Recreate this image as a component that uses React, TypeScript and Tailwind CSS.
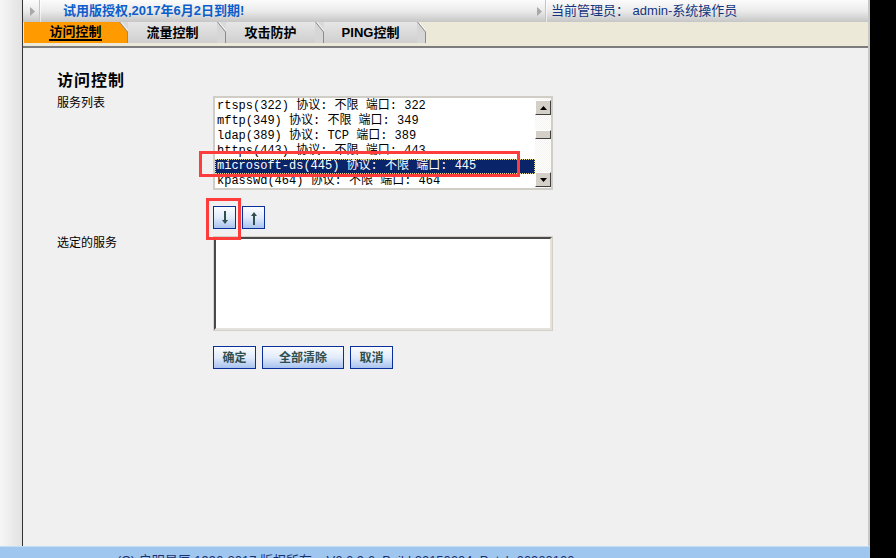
import React from "react";

const services = [
  "rtsps(322) 协议: 不限 端口: 322",
  "mftp(349) 协议: 不限 端口: 349",
  "ldap(389) 协议: TCP 端口: 389",
  "https(443) 协议: 不限 端口: 443",
  "microsoft-ds(445) 协议: 不限 端口: 445",
  "kpasswd(464) 协议: 不限 端口: 464",
];

const tabs = [
  { label: "流量控制", w: "w-[89px]" },
  { label: "攻击防护", w: "w-[89px]" },
  { label: "PING控制", w: "w-[93px]" },
];

function TabEdge({ left, right }: { left: string; right: string }) {
  return (
    <svg width="9" height="21" className="block shrink-0">
      <rect width="9" height="21" fill={right} />
      <polygon points="0,0 1,0 9,10 9,21 0,21" fill={left} />
      <polyline points="0.5,0 8.5,10 8.5,21" fill="none" stroke="#8c8c8c" strokeWidth="1" />
      <polyline points="2,0 9,8.5" fill="none" stroke="#f4f4f4" strokeWidth="1" />
    </svg>
  );
}

function Arrow({ up }: { up?: boolean }) {
  return (
    <svg width="8" height="14" viewBox="0 0 8 14" className={up ? "rotate-180" : ""}>
      <path d="M3 0h2v9h2l-3 4-3-4h2z" fill="#2f4f4f" />
    </svg>
  );
}

function TopArrow() {
  return (
    <svg width="5" height="9" viewBox="0 0 5 9">
      <path d="M0 0l5 4.5L0 9z" fill="#a8a8a8" />
    </svg>
  );
}

function ScrollBtn({ up }: { up?: boolean }) {
  return (
    <div className="flex h-[15px] w-[16px] items-center justify-center border border-t-white border-l-white border-r-[#404040] border-b-[#404040] bg-[#d4d0c8]">
      <svg width="7" height="4" viewBox="0 0 7 4" className={up ? "" : "rotate-180"}>
        <path d="M3.5 0L7 4H0z" fill="#000" />
      </svg>
    </div>
  );
}

const btn =
  "h-[23px] border border-[#0a2f9a] bg-gradient-to-b from-[#fbfcff] via-[#e2ebfa] to-[#a9c3ee] text-[12px] font-bold text-[#2f4f4f]";

export default function App() {
  return (
    <div
      className="flex h-[558px] w-[896px] overflow-hidden bg-black"
      style={{ fontFamily: '"Liberation Sans", "Noto Sans CJK SC", sans-serif' }}
    >
      <div className="flex w-[870px] shrink-0 flex-col">
        <div className="flex h-[546px] shrink-0">
          <div className="w-[22px] shrink-0 bg-gradient-to-r from-[#f6f6f6] to-[#e2e2e2]" />
          <div className="w-px shrink-0 bg-[#333]" />
          <main className="flex flex-1 flex-col border-r-2 border-[#c8c8c8] bg-[#f0f0f0]">
            <div className="flex h-[22px] items-center bg-gradient-to-b from-[#fbfbfb] via-[#ebebeb] to-[#c6c6c6]">
              <div className="flex h-full w-[514px] items-center">
                <div className="ml-[7px]">
                  <TopArrow />
                </div>
                <div className="ml-[4px] h-full w-[2px] border-l border-[#c4c4c4] bg-white/60" />
                <span className="ml-[22px] text-[13px] font-bold text-[#0b5ecb]">试用版授权,2017年6月2日到期!</span>
              </div>
              <div className="flex h-full items-center">
                <TopArrow />
                <div className="ml-[3px] h-full w-[2px] border-l border-[#c4c4c4] bg-white/60" />
                <span className="ml-[4px] text-[13px] text-[#14357e]">当前管理员： admin-系统操作员</span>
              </div>
            </div>

            <div className="flex h-[24px] bg-[#ece9d8] pl-px">
              <div className="flex h-[21px] w-[95px] items-center justify-center bg-[#ff9a00] pl-[8px]">
                <span className="border-b-2 border-black text-[13px] leading-[15px] font-bold text-black">访问控制</span>
              </div>
              <TabEdge left="#ff9a00" right="#d9d9d9" />
              {tabs.map((t, i) => (
                <React.Fragment key={t.label}>
                  <div
                    className={`flex h-[21px] ${t.w} items-center justify-center bg-gradient-to-b from-[#e6e6e6] to-[#cfcfcf] text-[13px] font-bold text-black`}
                  >
                    {t.label}
                  </div>
                  <TabEdge left="#d6d6d6" right={i === tabs.length - 1 ? "#ece9d8" : "#d9d9d9"} />
                </React.Fragment>
              ))}
            </div>
            <div className="h-[2px] bg-[#7c7c7c]" />

            <div className="relative flex-1 pl-[34px]">
              <h1 className="mt-[23px] h-[20px] text-[16px] leading-[20px] font-bold tracking-[1px] text-black">访问控制</h1>

              <div className="mt-[5px] flex">
                <div className="w-[156px] text-[12px] leading-[14px] text-black">服务列表</div>
                <div className="flex h-[94px] w-[340px] border-2 border-[#d0cdc6] bg-white">
                  <div
                    className="flex-1 overflow-hidden pt-px text-[12px] text-black"
                    style={{ fontFamily: '"Liberation Mono", "Noto Sans CJK SC", monospace' }}
                  >
                    {services.map((s, i) => (
                      <div
                        key={s}
                        className={
                          i === 4
                            ? "h-[15px] whitespace-pre bg-[#0a246a] pl-[2px] leading-[15px] text-white outline-1 outline-dotted outline-offset-[-1px] outline-[#e8e090]"
                            : "h-[15px] whitespace-pre pl-[2px] leading-[15px]"
                        }
                      >
                        {s}
                      </div>
                    ))}
                  </div>
                  <div className="flex w-[16px] flex-col bg-[repeating-conic-gradient(#f4f3ef_0_25%,#ffffff_0_50%)] bg-[length:2px_2px]">
                    <div className="mt-[2px]">
                      <ScrollBtn up />
                    </div>
                    <div className="mt-[15px] h-[9px] w-[16px] border border-t-white border-l-white border-r-[#404040] border-b-[#404040] bg-[#d4d0c8]" />
                    <div className="flex-1" />
                    <div className="mb-[1px]">
                      <ScrollBtn />
                    </div>
                  </div>
                </div>
              </div>

              <div className="ml-[156px] mt-[16px] flex gap-[6px]">
                <button className={`${btn} flex w-[23px] items-center justify-center`}>
                  <Arrow />
                </button>
                <button className={`${btn} flex w-[23px] items-center justify-center`}>
                  <Arrow up />
                </button>
              </div>

              <div className="mt-[7px] flex">
                <div className="w-[156px] text-[12px] leading-[14px] text-black">选定的服务</div>
                <div className="h-[95px] w-[340px] border border-[#d4d0c8]">
                  <div className="h-full border-2 border-t-[#4a4a4a] border-l-[#4a4a4a] border-r-[#e4e2dc] border-b-[#e4e2dc] bg-white" />
                </div>
              </div>

              <div className="ml-[156px] mt-[15px] flex gap-[6px]">
                <button className={`${btn} w-[43px]`}>确定</button>
                <button className={`${btn} w-[82px]`}>全部清除</button>
                <button className={`${btn} w-[43px]`}>取消</button>
              </div>

              <div className="pointer-events-none absolute left-[176px] top-[103px] h-[26px] w-[321px] border-[3px] border-[#ff3c3c]" />
              <div className="pointer-events-none absolute left-[183px] top-[150px] h-[42px] w-[35px] border-[3px] border-[#ff3c3c]" />
            </div>
          </main>
        </div>
        <footer className="h-[30px] shrink-0 border-t border-[#c4dcf4] bg-[#9ec6ee] pl-[117px] pt-[1px]">
          <span className="whitespace-pre text-[13px] leading-[15px] text-[#1a3070]">
            (C) 启明星辰 1996-2017 版权所有    V6.6.9.6  Build:20150604  Patch:66960100
          </span>
        </footer>
      </div>
      <div className="flex-1 bg-black" />
    </div>
  );
}
